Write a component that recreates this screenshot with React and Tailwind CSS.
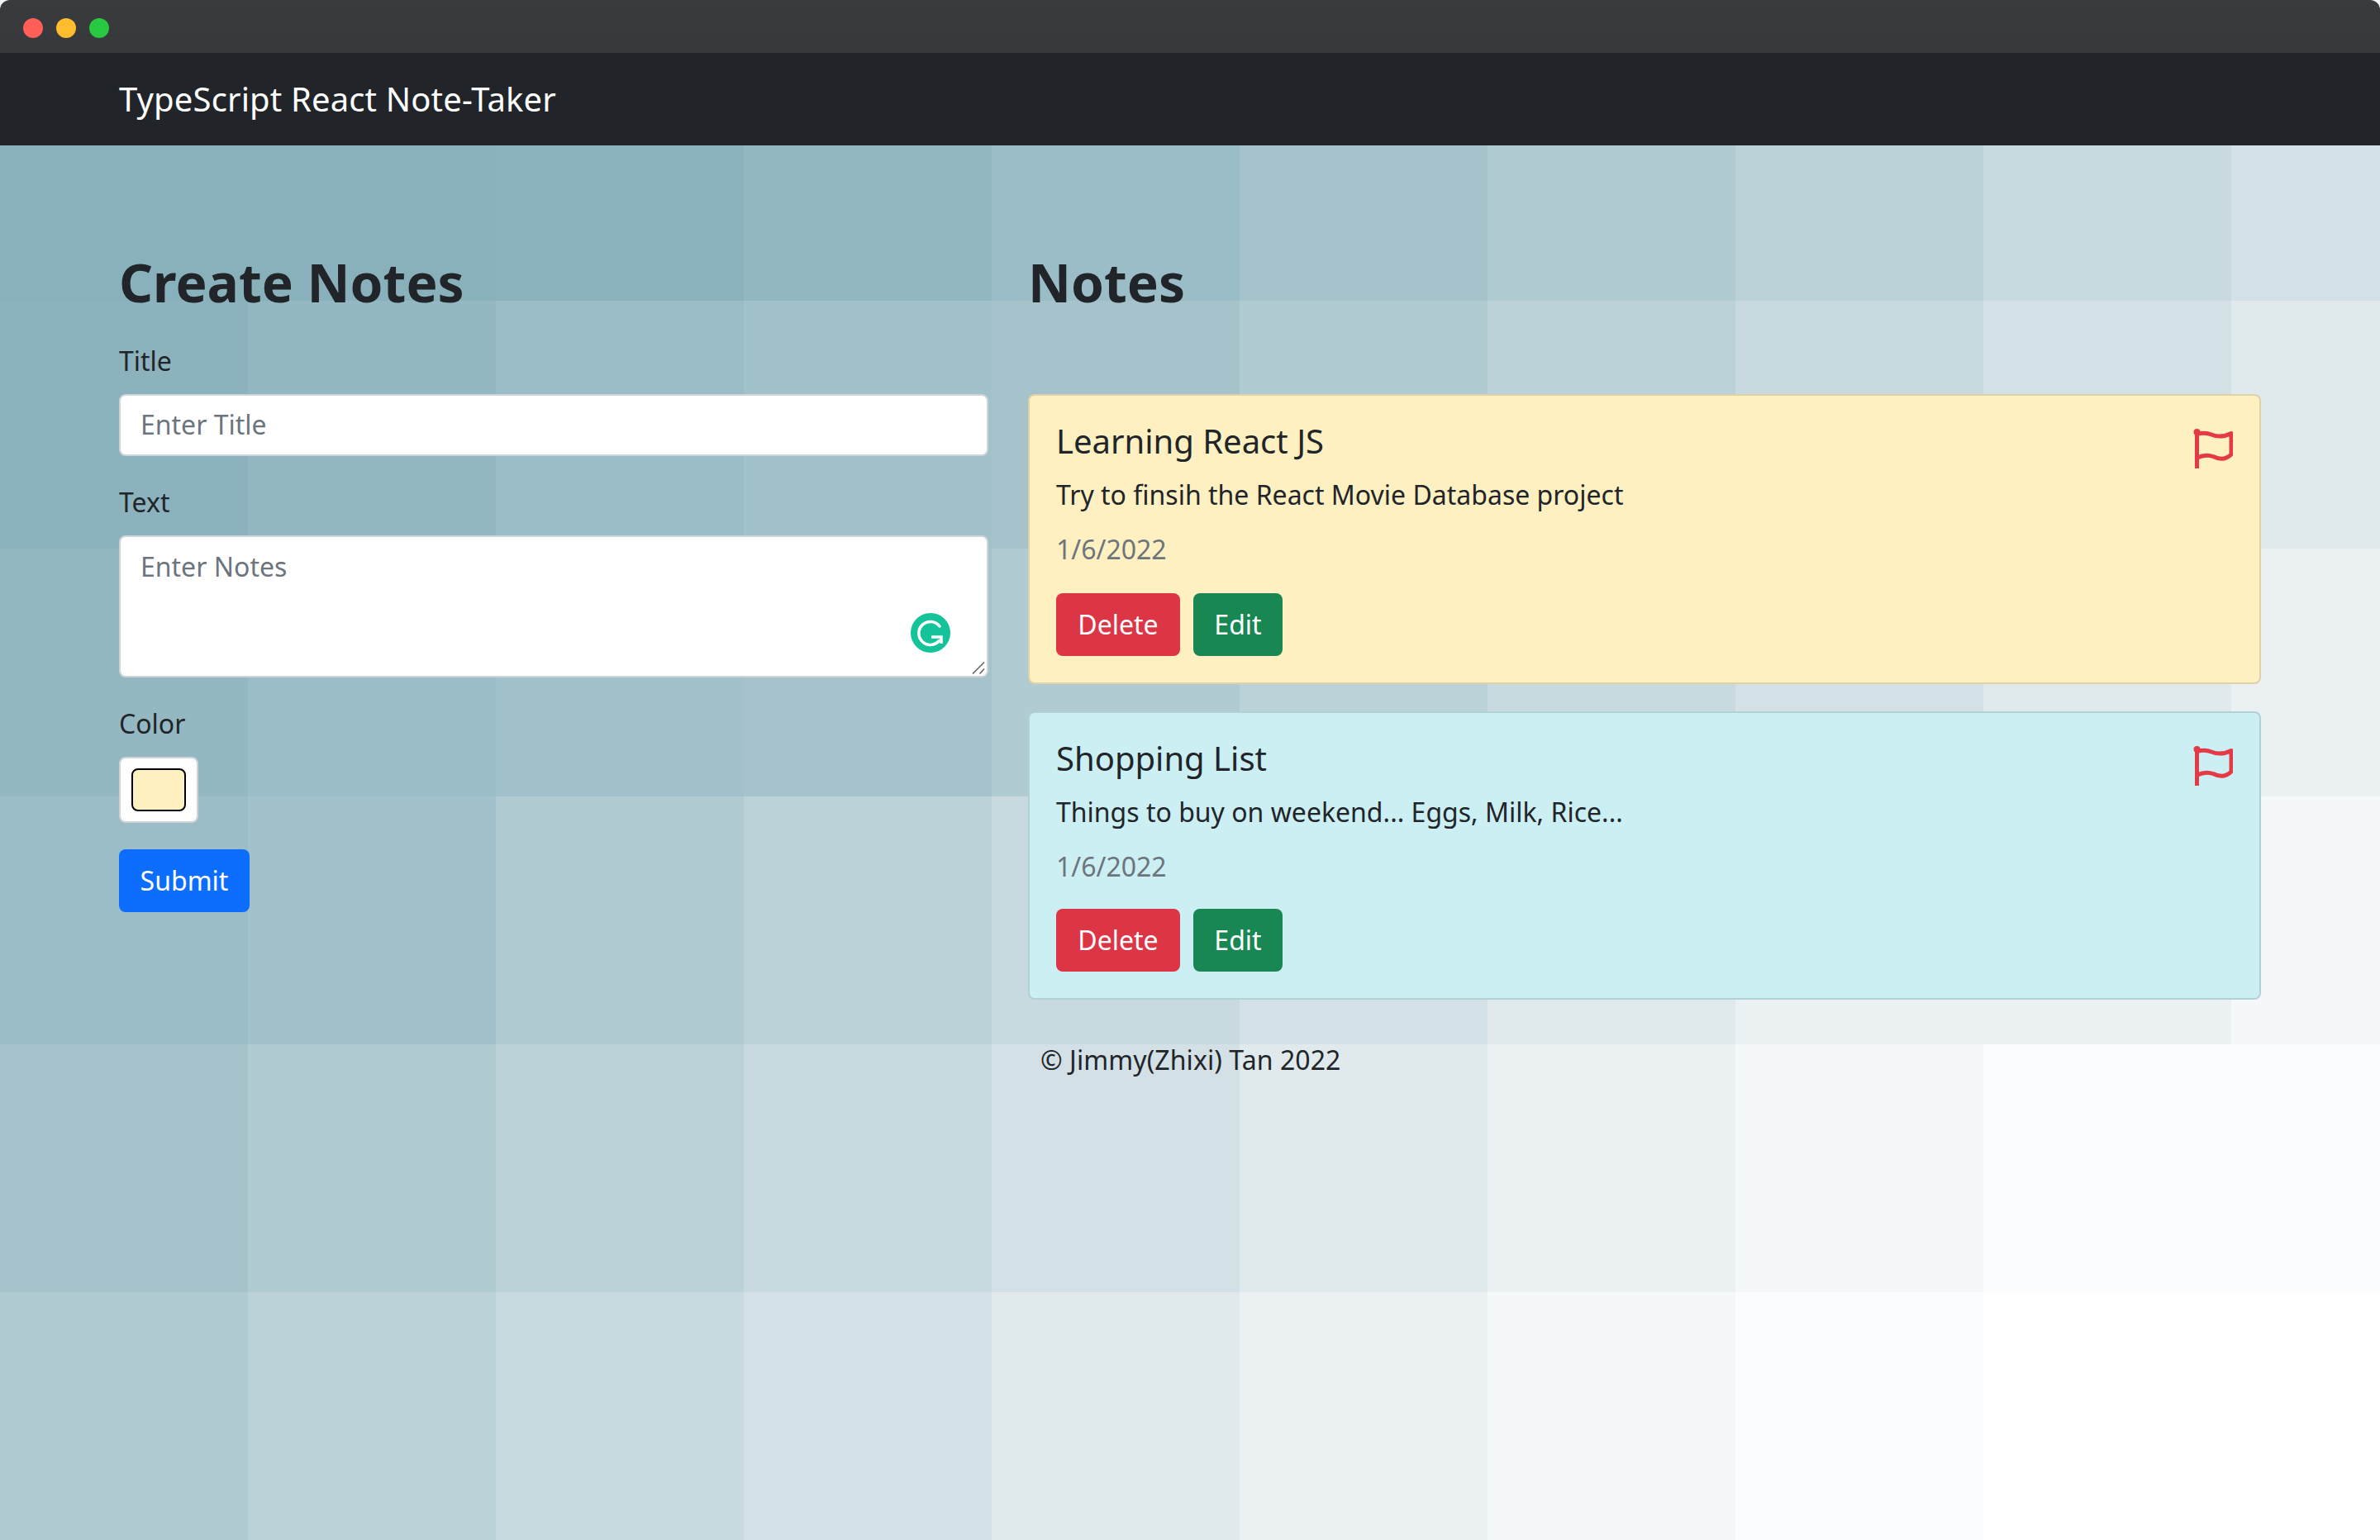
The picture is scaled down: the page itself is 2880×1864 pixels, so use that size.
import React from "react";

// colour ramp of the tiled page background
const ramp = [
  "#89b1bb", "#8cb3bd", "#93b8c2", "#9abdc7", "#a1c2cb",
  "#a6c3cb", "#b0cbd1", "#bbd2d8", "#c8d9e0", "#d3e0e6",
  "#e0eaec", "#ebf0f3", "#f4f8f8", "#fbfcfd", "#ffffff",
];

const firstRow = [0, 0, 1, 2, 3, 5, 6, 7, 8, 9];
const fourthRow = [3, 4, 6, 7, 8, 9, 10, 11, 11, 12];
const rowOffsets = [0, 1, 2, 3, 5, 6];

const tiles = [];
for (let row = 0; row < 6; row++) {
  for (let col = 0; col < 10; col++) {
    let index = Math.min(rowOffsets[row] + col, row < 5 ? 13 : 14);
    if (row === 0) index = firstRow[col];
    if (row === 3) index = fourthRow[col];
    tiles.push({ id: `${row}-${col}`, color: ramp[index] });
  }
}

const notes = [
  { title: "Learning React JS", text: "Try to finsih the React Movie Database project", date: "1/6/2022", bg: "bg-[#fef0c0]", dateGap: "mb-[29px]", cardGap: "mb-[33px]" },
  { title: "Shopping List", text: "Things to buy on weekend... Eggs, Milk, Rice...", date: "1/6/2022", bg: "bg-[#cbeff3]", dateGap: "mb-[27px]", cardGap: "mb-0" },
];

const FlagIcon = () => (
  <svg width="48" height="48" viewBox="0 0 48 48" fill="none" className="shrink-0">
    <circle cx="4.5" cy="4" r="4" fill="#e63946" />
    <path d="M4.5 4V47" stroke="#e63946" strokeWidth="5" strokeLinecap="round" />
    <path
      d="M5 6.5C11 4.5 16 4.5 22 7C29 10 37 10 46 5.5V31C39 38 31 37 24 33.5C17 31 11 32 5 35"
      stroke="#e63946"
      strokeWidth="5"
      strokeLinejoin="round"
    />
  </svg>
);

const GrammarlyIcon = () => (
  <svg width="48" height="48" viewBox="0 0 48 48" fill="none">
    <circle cx="24" cy="24" r="24" fill="#15c39a" />
    <path d="M35 16A14 14 0 1 0 34.5 33.5" stroke="#fff" strokeWidth="3.5" strokeLinecap="round" />
    <path d="M25 29H37V37" stroke="#fff" strokeWidth="3.5" />
  </svg>
);

const ResizeGrip = () => (
  <svg width="16" height="16" viewBox="0 0 16 16" fill="none">
    <path d="M1 15.5L15 1.5M9.5 15.5L15 9.5" stroke="#666" strokeWidth="1.6" />
  </svg>
);

const Field = ({ label, children }) => (
  <div className="mb-8">
    <label className="block mb-4 text-[32px] leading-[48px] text-[#212529]">{label}</label>
    {children}
  </div>
);

const NoteCard = ({ note }) => (
  <div className={`${note.bg} ${note.cardGap} flex justify-between items-start border-2 border-black/[0.125] rounded-lg p-8`}>
    <div>
      <h5 className="mb-[18px] text-[40px] leading-[46px] text-[#212529]">{note.title}</h5>
      <p className="mb-[18px] text-[32px] leading-[48px] text-[#212529]">{note.text}</p>
      <p className={`${note.dateGap} text-[32px] leading-[48px] text-[#6c757d]`}>{note.date}</p>
      <div className="flex gap-4">
        <button className="h-[76px] w-[150px] rounded-lg bg-[#dc3545] text-white text-[32px]">Delete</button>
        <button className="h-[76px] w-[108px] rounded-lg bg-[#198754] text-white text-[32px]">Edit</button>
      </div>
    </div>
    <div className="mt-2">
      <FlagIcon />
    </div>
  </div>
);

const App = () => {
  return (
    <div className="w-[2880px] h-[1864px] overflow-hidden bg-[#f2f3f4] font-['Noto_Sans',sans-serif]">
      <div className="h-16 pt-1 rounded-t-[12px] bg-gradient-to-b from-[#3a3b3e] to-[#37383b] flex items-center gap-4 pl-7">
        <span className="w-6 h-6 rounded-full bg-[#ff5f57]" />
        <span className="w-6 h-6 rounded-full bg-[#febc2e]" />
        <span className="w-6 h-6 rounded-full bg-[#28c840]" />
      </div>
      <nav className="h-28 bg-[#212529] flex items-center px-36">
        <span className="text-[40px] tracking-[0.14px] text-white">TypeScript React Note-Taker</span>
      </nav>

      <main className="grid h-[1688px]">
        {/* tiled background shares the grid cell with the content */}
        <div className="col-start-1 row-start-1 grid grid-cols-[repeat(10,300px)] grid-rows-[188px_repeat(5,300px)] overflow-hidden">
          {tiles.map((tile) => (
            <div key={tile.id} style={{ backgroundColor: tile.color }} />
          ))}
        </div>

        <div className="col-start-1 row-start-1 grid grid-cols-[1052px_1492px] gap-x-12 px-36 pt-[127px] items-start">
          <section>
            <h2 className="mb-[33px] text-[64px] leading-[77px] font-bold text-[#212529]">Create Notes</h2>
            <Field label="Title">
              <input
                placeholder="Enter Title"
                className="block w-full h-[75px] px-6 pb-[2px] bg-white border-2 border-[#ced4da] rounded-lg text-[32px] placeholder:text-[#6c757d]"
              />
            </Field>
            <Field label="Text">
              <div className="relative mb-px">
                <textarea
                  placeholder="Enter Notes"
                  className="block w-full h-[172px] px-6 py-3 bg-white border-2 border-[#ced4da] rounded-lg text-[32px] leading-[48px] resize-none placeholder:text-[#6c757d]"
                />
                <div className="absolute right-[46px] top-[94px] leading-none">
                  <GrammarlyIcon />
                </div>
                <div className="absolute right-1 bottom-1 leading-none">
                  <ResizeGrip />
                </div>
              </div>
            </Field>
            <Field label="Color">
              <input
                type="color"
                defaultValue="#fef0c0"
                className="block w-24 h-20 p-3 px-[13px] bg-white border-2 border-[#ced4da] rounded-lg [&::-webkit-color-swatch-wrapper]:p-0 [&::-webkit-color-swatch]:rounded-lg [&::-webkit-color-swatch]:border-2 [&::-webkit-color-swatch]:border-black"
              />
            </Field>
            <button className="h-[76px] w-[158px] rounded-lg bg-[#0d6efd] text-white text-[32px]">Submit</button>
          </section>

          <section>
            <h2 className="mb-[97px] text-[64px] leading-[77px] font-bold text-[#212529]">Notes</h2>
            {notes.map((note) => (
              <NoteCard key={note.title} note={note} />
            ))}
            <p className="mt-[49px] pl-[15px] text-[32px] tracking-[0.08px] leading-[48px] text-[#212529]">© Jimmy(Zhixi) Tan 2022</p>
          </section>
        </div>
      </main>
    </div>
  );
};

export default App;
